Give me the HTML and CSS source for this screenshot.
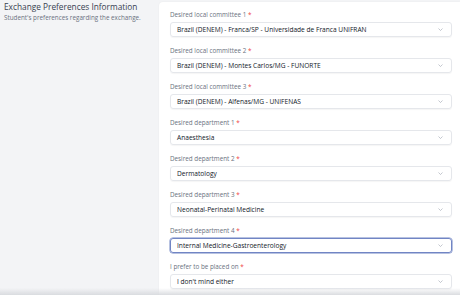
FILE: index.html
```html
<!DOCTYPE html>
<html>
<head>
<meta charset="utf-8">
<link rel="stylesheet" href="styles.css">
</head>
<body>
<div class="page">
  <div class="intro">
    <h2 class="title">Exchange Preferences Information</h2>
    <p class="subtitle">Student's preferences regarding the exchange.</p>
  </div>
  <div class="card">
    <div class="field">
      <div class="label">Desired local committee 1 <span class="req">*</span></div>
      <div class="select"><span>Brazil (DENEM) - Franca/SP - Universidade de Franca UNIFRAN</span><svg class="chev" viewBox="0 0 10 6"><path d="M1 1l4 4 4-4"/></svg></div>
    </div>
    <div class="field">
      <div class="label">Desired local committee 2 <span class="req">*</span></div>
      <div class="select"><span>Brazil (DENEM) - Montes Carlos/MG - FUNORTE</span><svg class="chev" viewBox="0 0 10 6"><path d="M1 1l4 4 4-4"/></svg></div>
    </div>
    <div class="field">
      <div class="label">Desired local committee 3 <span class="req">*</span></div>
      <div class="select"><span>Brazil (DENEM) - Alfenas/MG - UNIFENAS</span><svg class="chev" viewBox="0 0 10 6"><path d="M1 1l4 4 4-4"/></svg></div>
    </div>
    <div class="field">
      <div class="label">Desired department 1 <span class="req">*</span></div>
      <div class="select"><span>Anaesthesia</span><svg class="chev" viewBox="0 0 10 6"><path d="M1 1l4 4 4-4"/></svg></div>
    </div>
    <div class="field">
      <div class="label">Desired department 2 <span class="req">*</span></div>
      <div class="select"><span>Dermatology</span><svg class="chev" viewBox="0 0 10 6"><path d="M1 1l4 4 4-4"/></svg></div>
    </div>
    <div class="field">
      <div class="label">Desired department 3 <span class="req">*</span></div>
      <div class="select"><span>Neonatal-Perinatal Medicine</span><svg class="chev" viewBox="0 0 10 6"><path d="M1 1l4 4 4-4"/></svg></div>
    </div>
    <div class="field">
      <div class="label">Desired department 4 <span class="req">*</span></div>
      <div class="select focused"><span>Internal Medicine-Gastroenterology</span><svg class="chev" viewBox="0 0 10 6"><path d="M1 1l4 4 4-4"/></svg></div>
    </div>
    <div class="field">
      <div class="label">I prefer to be placed on <span class="req">*</span></div>
      <div class="select"><span>I don't mind either</span><svg class="chev" viewBox="0 0 10 6"><path d="M1 1l4 4 4-4"/></svg></div>
    </div>
  </div>
</div>
<div class="fade"></div>
</body>
</html>
```

FILE: styles.css
```css
html, body {
  margin: 0;
  padding: 0;
  background: #f3f4f6;
  font-family: "Open Sans", "Liberation Sans", sans-serif;
  overflow: hidden;
  height: 295px;
}
.page {
  display: grid;
  grid-template-columns: 159px 1fr;
  padding-top: 2px;
}
.intro {
  padding-left: 4px;
}
.title {
  margin: 0;
  font-size: 8.3px;
  font-weight: 400;
  color: #374151;
  line-height: 10px;
  margin-top: 0;
}
.subtitle {
  margin: 0;
  margin-top: 1px;
  font-size: 6.3px;
  color: #6b7280;
  line-height: 9px;
}
.card {
  background: #fff;
  border-radius: 4px 0 0 0;
  box-shadow: 0 0 2px rgba(0,0,0,0.06);
  padding: 8px 8px 20px 11px;
  display: flex;
  flex-direction: column;
  gap: 9px;
}
.field {
  display: flex;
  flex-direction: column;
  gap: 3px;
}
.label {
  font-size: 6.3px;
  line-height: 9px;
  color: #6b7280;
}
.req {
  color: #ef4444;
}
.select {
  height: 13px;
  border: 1px solid #e5e7eb;
  border-radius: 3px;
  box-shadow: 0 1px 1px rgba(0,0,0,0.04);
  display: flex;
  align-items: center;
  justify-content: space-between;
  padding: 0 8px 0 6px;
  font-size: 6.6px;
  color: #111827;
}
.select.focused {
  border-color: #7185c4;
  box-shadow: 0 0 0 0.5px #7185c4;
}
.chev {
  width: 5px;
  height: 3px;
  fill: none;
  stroke: #9ca3af;
  stroke-width: 1.2;
}
.fade {
  position: fixed;
  left: 0;
  right: 0;
  bottom: 0;
  height: 7px;
  background: linear-gradient(to bottom, rgba(220,222,226,0), rgba(215,217,221,0.9));
}
```
